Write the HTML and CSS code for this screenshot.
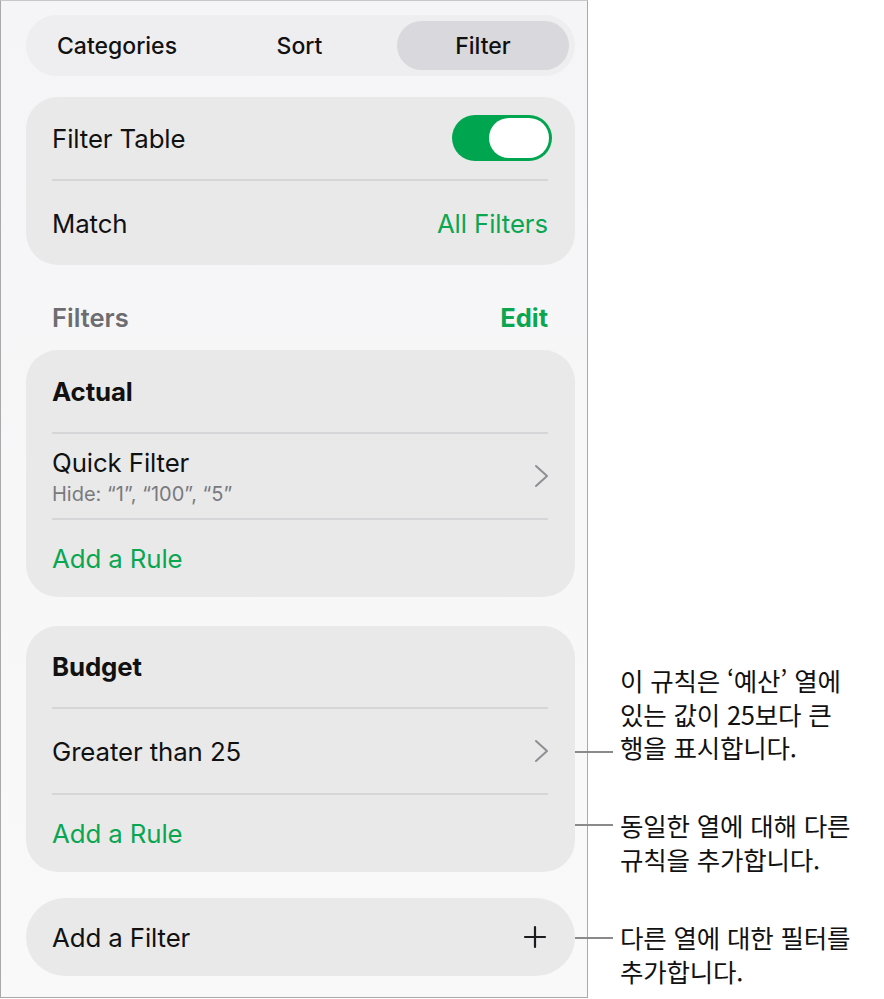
FILE: index.html
```html
<!DOCTYPE html>
<html lang="ko">
<head>
<meta charset="utf-8">
<title>Filter</title>
<link rel="stylesheet" href="styles.css">
</head>
<body>
<div class="stage">
  <div class="panel">
    <div class="segmented">
      <div class="seg">Categories</div>
      <div class="seg">Sort</div>
      <div class="seg seg-active">Filter</div>
    </div>

    <div class="card card-first">
      <div class="row row-h82">
        <span class="label">Filter Table</span>
        <span class="toggle"><span class="knob"></span></span>
      </div>
      <div class="divider"></div>
      <div class="row row-h84">
        <span class="label">Match</span>
        <span class="label green">All Filters</span>
      </div>
    </div>

    <div class="section-head">
      <span class="head-title">Filters</span>
      <span class="head-edit">Edit</span>
    </div>

    <div class="card">
      <div class="row row-h82"><span class="label bold">Actual</span></div>
      <div class="divider"></div>
      <div class="row row-h84">
        <div class="stack">
          <span class="label">Quick Filter</span>
          <span class="sub">Hide: “1”, “100”, “5”</span>
        </div>
        <svg class="chev" width="15" height="24" viewBox="0 0 15 24"><path d="M2 2 L13 12 L2 22" fill="none" stroke="#8e8e93" stroke-width="2" stroke-linecap="round" stroke-linejoin="round"/></svg>
      </div>
      <div class="divider"></div>
      <div class="row row-h77"><span class="label green">Add a Rule</span></div>
    </div>

    <div class="card card-second">
      <div class="row row-h81"><span class="label bold">Budget</span></div>
      <div class="divider"></div>
      <div class="row row-h84">
        <span class="label">Greater than 25</span>
        <svg class="chev" width="15" height="24" viewBox="0 0 15 24"><path d="M2 2 L13 12 L2 22" fill="none" stroke="#8e8e93" stroke-width="2" stroke-linecap="round" stroke-linejoin="round"/></svg>
      </div>
      <div class="divider"></div>
      <div class="row row-h77"><span class="label green">Add a Rule</span></div>
    </div>

    <div class="card card-add">
      <div class="row row-h78">
        <span class="label">Add a Filter</span>
        <svg class="plus" width="24" height="24" viewBox="0 0 24 24"><path d="M12 2 V22 M2 12 H22" fill="none" stroke="#1c1c1e" stroke-width="2.2" stroke-linecap="round"/></svg>
      </div>
    </div>
  </div>

  <div class="callout callout-1">
    <span class="leader"></span>
    <p>이 규칙은 ‘예산’ 열에<br>있는 값이 25보다 큰<br>행을 표시합니다.</p>
  </div>
  <div class="callout callout-2">
    <span class="leader"></span>
    <p>동일한 열에 대해 다른<br>규칙을 추가합니다.</p>
  </div>
  <div class="callout callout-3">
    <span class="leader"></span>
    <p>다른 열에 대한 필터를<br>추가합니다.</p>
  </div>
</div>
</body>
</html>
```

FILE: styles.css
```css
* { box-sizing: border-box; }
html, body { margin: 0; padding: 0; background: #ffffff; }
body {
  font-family: Inter, "Noto Sans", "Noto Sans CJK KR", sans-serif;
  color: #111111;
}
.stage { position: relative; width: 884px; height: 999px; }

.panel {
  width: 588px;
  height: 998px;
  border: 1px solid #a9a9ab;
  border-top-color: #c8c8ca;
  background: linear-gradient(#f5f5f7, #f9f9f9);
  padding: 14px 12px 0 25px;
  display: flex;
  flex-direction: column;
}

.segmented {
  height: 61px;
  background: #eeeef0;
  border-radius: 31px;
  padding: 6px;
  display: grid;
  grid-template-columns: 170px 195px 172px;
  align-items: stretch;
  margin-bottom: 21px;
}
.seg {
  display: flex;
  align-items: center;
  justify-content: center;
  font-size: 23px;
  font-weight: 500;
  color: #111;
  border-radius: 25px;
}
.seg-active { background: #d9d9dd; }

.card {
  background: #e9e9ea;
  border-radius: 32px;
  padding: 0 27px 0 26px;
}
.card-second { margin-top: 29px; }
.card-add { margin-top: 26px; border-radius: 39px; }

.row { display: flex; align-items: center; justify-content: space-between; }
.row-h77 { height: 77px; }
.row-h78 { height: 78px; }
.row-h81 { height: 81px; }
.row-h82 { height: 82px; }
.row-h84 { height: 84px; }

.divider { height: 2px; background: #d6d6d8; }

.label { font-size: 25.8px; color: #111; letter-spacing: -0.1px; }
.label.bold { font-weight: 700; }
.green { color: #0aa651; }
.stack { display: flex; flex-direction: column; }
.sub { font-size: 20px; color: #7a7a7d; margin-top: 4px; }

.chev { margin-right: -1px; }
.plus { margin-right: 1px; }

.toggle {
  position: relative;
  width: 100px;
  height: 46px;
  border-radius: 23px;
  background: #00a54f;
  margin-right: -4px;
}
.knob {
  position: absolute;
  right: 3px;
  top: 3px;
  width: 60px;
  height: 40px;
  border-radius: 20px;
  background: #ffffff;
}

.section-head {
  height: 85px;
  padding: 37px 27px 18px 26px;
  display: flex;
  justify-content: space-between;
  align-items: center;
}
.head-title { font-size: 25.5px; font-weight: 600; color: #6d6d71; }
.head-edit { font-size: 25.5px; font-weight: 700; color: #0aa651; }

.callout {
  position: absolute;
  left: 575px;
  display: flex;
  align-items: flex-start;
}
.callout p {
  margin: 0 0 0 45px;
  font-family: "Noto Sans CJK KR", sans-serif;
  font-size: 25.5px;
  line-height: 33.5px;
  color: #111;
  white-space: nowrap;
  letter-spacing: -0.2px;
}
.leader {
  position: absolute;
  left: 0;
  width: 38px;
  height: 2px;
  background: #8a8a8a;
}
.callout-1 { top: 663px; }
.callout-1 .leader { top: 88px; }
.callout-2 { top: 808px; }
.callout-2 .leader { top: 16px; }
.callout-3 { top: 920px; }
.callout-3 .leader { top: 17px; }
```
